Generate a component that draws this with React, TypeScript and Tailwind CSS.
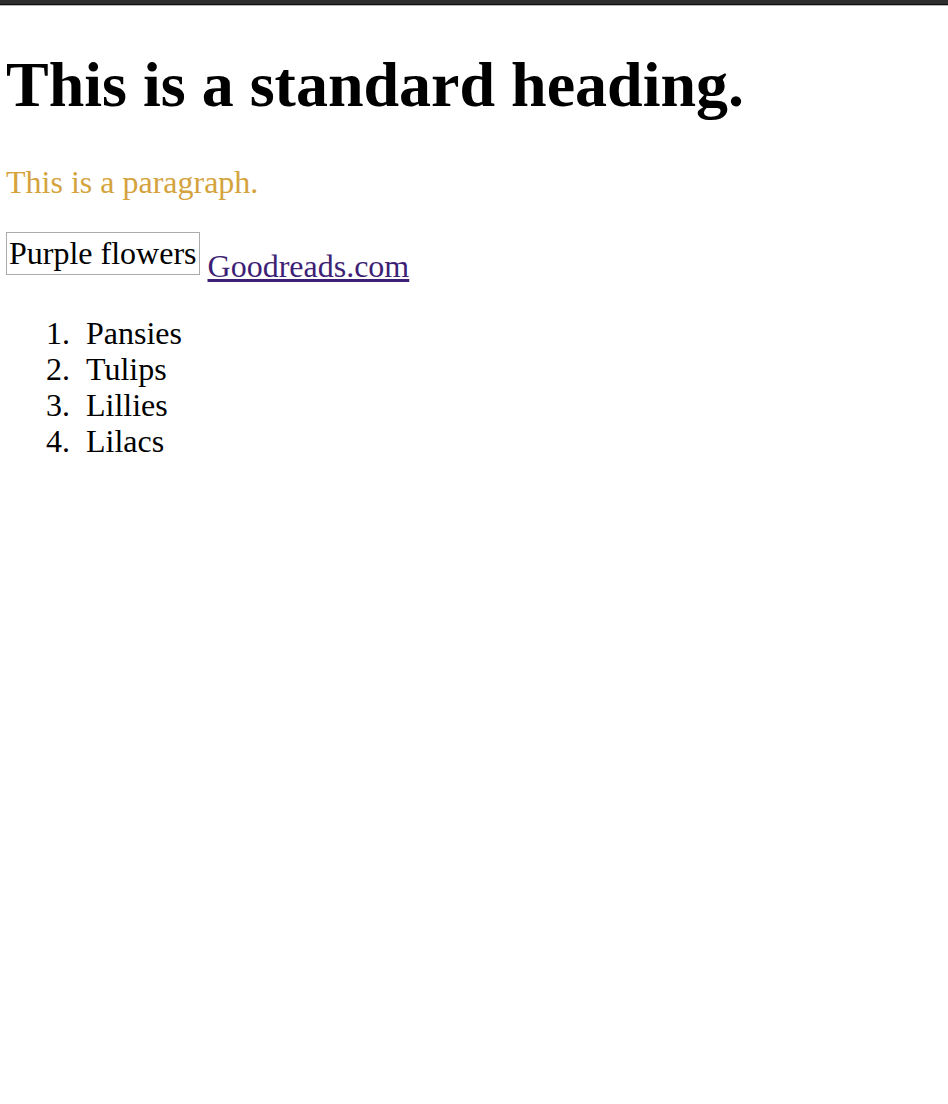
const flowers = ['Pansies', 'Tulips', 'Lillies', 'Lilacs'];

export default function App() {
  return (
    <div className="min-h-[1104px] bg-white text-black" style={{ fontFamily: '"Liberation Serif", "Times New Roman", serif' }}>
      {/* window chrome strip */}
      <div className="h-[4px] bg-[#2e2e2e]" />
      <div className="h-[1px] bg-[#111111]" />
      <div className="h-[1px] bg-[#b5b5b5]" />

      <div className="px-[6px] text-[32px] leading-[1.15]">
        <h1 className="my-[42px] text-[64px] font-bold leading-[1.15]">This is a standard heading.</h1>

        <p className="my-[32px] text-[#d4a33e]">This is a paragraph.</p>

        <p className="my-[32px]">
          <span className="inline-block overflow-hidden border border-[#ababab] px-[2px] py-[2px] align-baseline">
            Purple flowers
          </span>{' '}
          <a href="#" className="relative top-[2px] text-[#3e1f76] underline">
            Goodreads.com
          </a>
        </p>

        <ol className="my-[32px] list-none leading-[36px]">
          {flowers.map((name, i) => (
            <li key={name} className="flex">
              <span className="w-[80px] shrink-0 pr-[16px] text-right">{i + 1}.</span>
              <span>{name}</span>
            </li>
          ))}
        </ol>
      </div>
    </div>
  );
}
